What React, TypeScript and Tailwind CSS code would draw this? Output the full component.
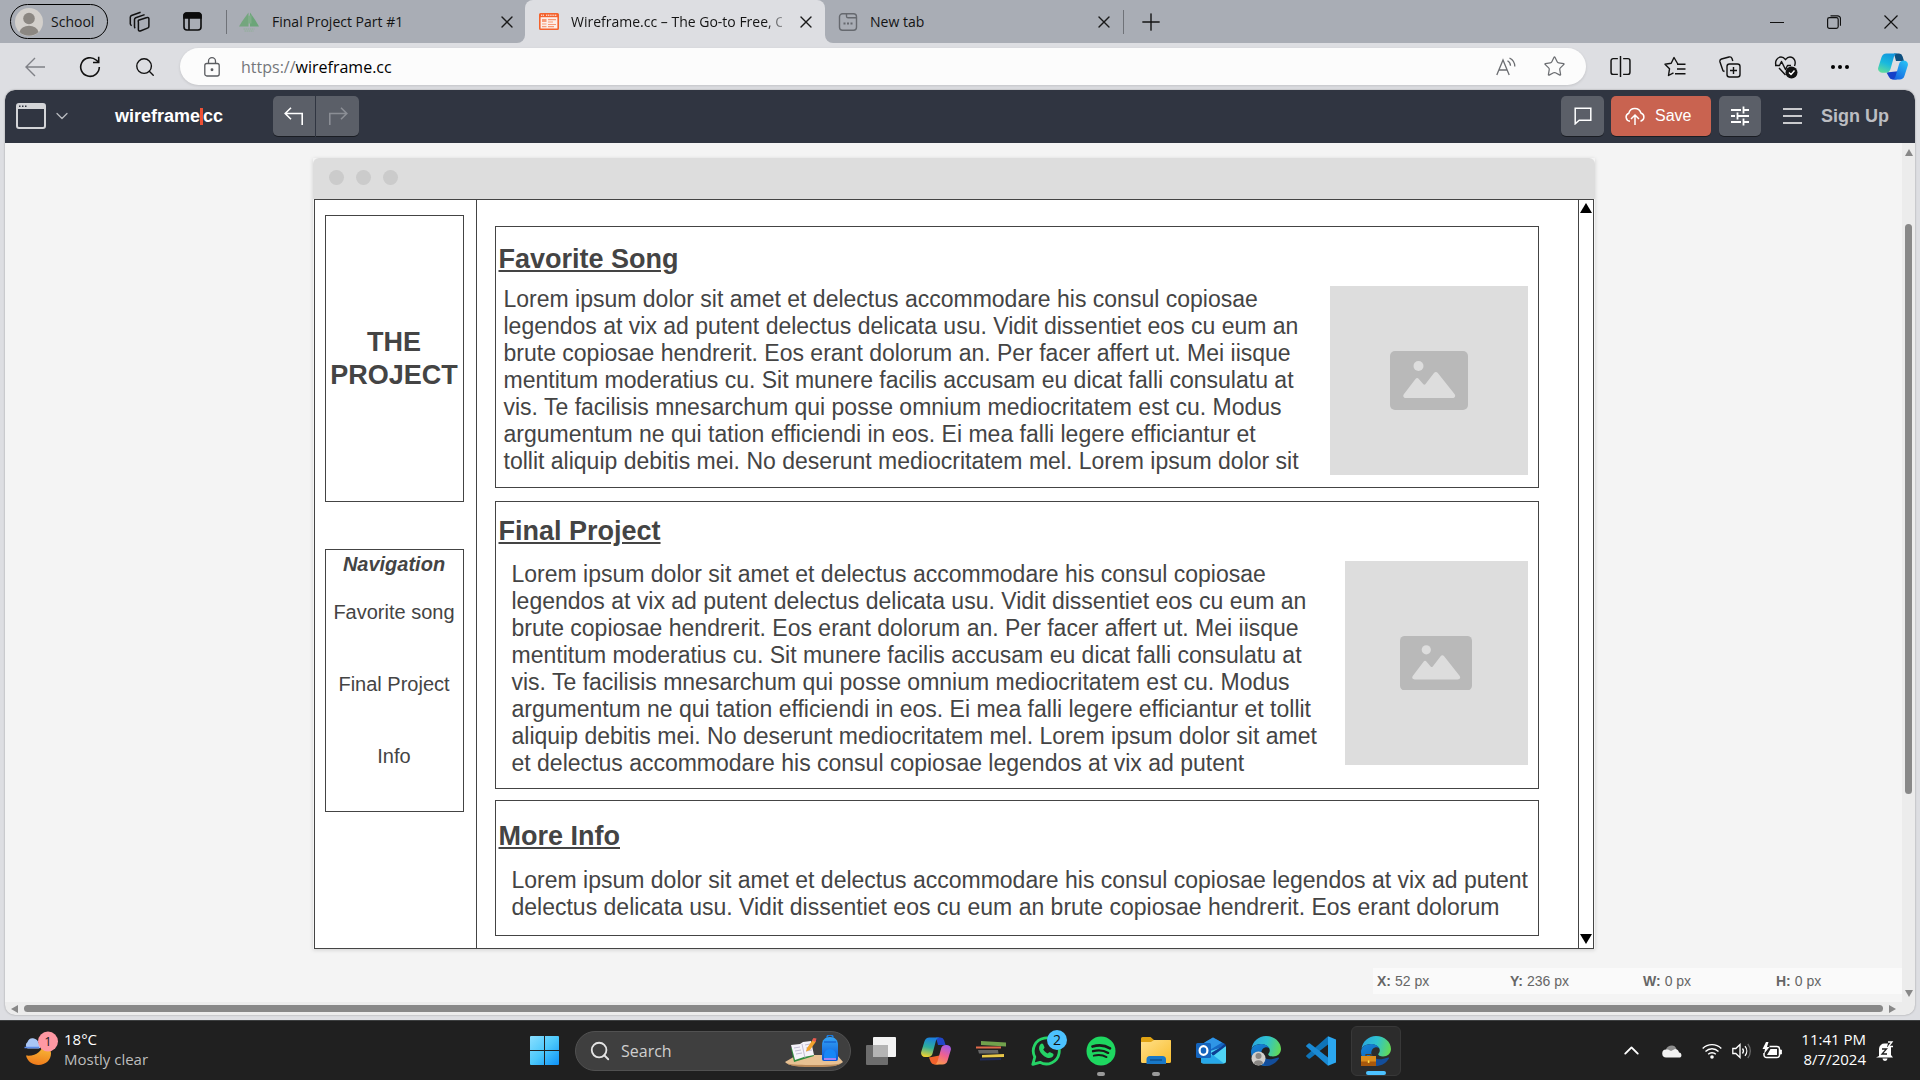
import React from "react";
import { Search, Plus, X, Star, ChevronUp, ChevronDown } from "lucide-react";

const UI = "font-['Open_Sans',sans-serif]";

/* ---------- Browser tab strip ---------- */

function Favicon({ kind }: { kind: "sail" | "wire" | "new" }) {
  if (kind === "sail")
    return (
      <svg viewBox="0 0 20 20" className="size-5">
        <path d="M9.5 0.5 3 9.500 0 14.500h9.500z" fill="#74a67e" />
        <path d="M11 0.500 16.500 8.500 20 14.500h-9z" fill="#6ba578" />
        <path d="M9 4v7.500h3.500V3z" fill="#7fae88" />
        <path d="M4.500 17h11M5.500 19h9" stroke="#8fae98" strokeWidth="1" strokeDasharray="1.500 0.500" />
      </svg>
    );
  if (kind === "wire")
    return (
      <svg viewBox="0 0 20 17" className="h-[17px] w-5">
        <rect x="0.8" y="0.8" width="18.4" height="15.4" rx="0.8" fill="#fdeee8" stroke="#f4622d" strokeWidth="1.6" />
        <rect x="1" y="1" width="18" height="3.2" fill="#f4622d" />
        <path d="M2 2.2h3M7 2.2h11" stroke="#fff" strokeWidth="1" strokeDasharray="1.2 0.6" />
        <rect x="3" y="6" width="4.5" height="3" fill="#f79a77" />
        <path d="M9 6.6h8M9 9h5M3 11h4.5M9 11.5h8M3 13.6h4.5M9 13.6h6" stroke="#f79a77" strokeWidth="1.1" />
      </svg>
    );
  return (
    <svg viewBox="0 0 20 18" className="h-[18px] w-5" fill="none" stroke="#66696f" strokeWidth="1.4">
      <rect x="1.5" y="0.8" width="17" height="16.4" rx="3" />
      <path d="M8.5 1v2.2a1.6 1.6 0 0 0 1.6 1.6h8.2" />
      <path d="M5.5 10.5h2M9 10.5h2M12.5 10.5h2" strokeWidth="2" />
    </svg>
  );
}

function Close() {
  return (
    <button aria-label="Close tab" className="flex size-6 shrink-0 items-center justify-center text-[#1a1a1a]">
      <X size={20} strokeWidth={1.6} />
    </button>
  );
}

function TabStrip() {
  return (
    <div className={`flex h-[43px] items-center bg-[#a9adb5] text-[14px] text-[#141414] ${UI}`}>
      <button className="ml-[10px] flex h-[35px] w-[98px] items-center gap-2 rounded-full border-[1.5px] border-black pl-1">
        <svg viewBox="0 0 28 28" className="size-7">
          <circle cx="14" cy="14" r="14" fill="#d3d0cc" />
          <circle cx="14" cy="10.5" r="5.8" fill="#8b8782" />
          <path d="M4.500 24a9.600 7.200 0 0 1 19 0a14 14 0 0 1-19 0z" fill="#8b8782" />
        </svg>
        School
      </button>
      <button aria-label="Workspaces" className="ml-5">
        <svg viewBox="0 0 22 22" className="size-[22px]" fill="none" stroke="#111" strokeWidth="1.5" strokeLinejoin="round">
          <path d="M10.5 9.2 19 6.5a1.4 1.4 0 0 1 1.9 1.3v7.4a2 2 0 0 1-1.4 1.9l-7.2 2.9a1.4 1.4 0 0 1-1.9-1.3v-7.6a2 2 0 0 1 .1-1.9z" />
          <path d="M7.3 17.2a1.6 1.6 0 0 1-.8-1.4V8.5A2 2 0 0 1 7.7 6.7L16.6 3.6" />
          <path d="M3.8 14.400A1.600 1.600 0 0 1 2.300 13V6.300A2 2 0 0 1 3.500 4.500L12.600 1.300" />
        </svg>
      </button>
      <button aria-label="Tab actions" className="ml-[33px]">
        <svg viewBox="0 0 19 19" className="size-[19px]" fill="none" stroke="#0c0c0c" strokeWidth="1.600">
          <rect x="1" y="1" width="17" height="17" rx="3" />
          <path d="M1 3.200A2.500 2.500 0 0 1 3.500 1h12A2.500 2.500 0 0 1 18 3.200V6H1z" fill="#0c0c0c" />
          <path d="M6 6v12" />
        </svg>
      </button>
      <span className="ml-6 h-6 w-px bg-[#6f7278]" />
      <div className="ml-3 flex w-[286px] items-center gap-[13px] pr-[6px]">
        <Favicon kind="sail" />
        <span className="flex-1 whitespace-nowrap">Final Project Part #1</span>
        <Close />
      </div>
      <div className="relative flex h-full w-[300px] items-center gap-3 rounded-t-lg bg-[#dddee2] pr-[7px] pl-[14px]">
        <span className="absolute bottom-0 -left-2 size-2 bg-[#dddee2]">
          <span className="block size-full rounded-br-lg bg-[#a9adb5]" />
        </span>
        <span className="absolute -right-2 bottom-0 size-2 bg-[#dddee2]">
          <span className="block size-full rounded-bl-lg bg-[#a9adb5]" />
        </span>
        <Favicon kind="wire" />
        <span className="min-w-0 flex-1 whitespace-nowrap [mask-image:linear-gradient(to_right,#000_92%,transparent_105%)]">
          Wireframe.cc – The Go-to Free, O
        </span>
        <Close />
      </div>
      <div className="flex w-[298px] items-center gap-3 pr-[7px] pl-[13px]">
        <Favicon kind="new" />
        <span className="flex-1">New tab</span>
        <Close />
      </div>
      <span className="h-6 w-px bg-[#6f7278]" />
      <button aria-label="New tab" className="ml-[13px]">
        <Plus size={28} strokeWidth={1.2} />
      </button>
      <div className="ml-auto flex items-center gap-[43px] pr-[22px]">
        <button aria-label="Minimize">
          <svg viewBox="0 0 14 14" className="size-[14px]"><path d="M0 7.500h14" stroke="#111" /></svg>
        </button>
        <button aria-label="Restore">
          <svg viewBox="0 0 14 14" className="size-[14px]" fill="none" stroke="#111" strokeWidth="1.200">
            <rect x="0.600" y="2.700" width="10.600" height="10.600" rx="1.800" />
            <path d="M3.500 0.800h7a3 3 0 0 1 3 3v7" />
          </svg>
        </button>
        <button aria-label="Close window">
          <svg viewBox="0 0 14 14" className="size-[14px]"><path d="M0.500 0.500l13 13M13.500 0.500l-13 13" stroke="#111" strokeWidth="1.200" /></svg>
        </button>
      </div>
    </div>
  );
}

/* ---------- Address bar ---------- */

function EdgeCopilot() {
  return (
    <svg viewBox="0 0 30 27" className="h-[27px] w-[30px]">
      <defs>
        <linearGradient id="ec1" x1="0.600" y1="0" x2="0.200" y2="1">
          <stop offset="0" stopColor="#1196dd" /><stop offset="0.500" stopColor="#19b9de" /><stop offset="1" stopColor="#62dd9a" />
        </linearGradient>
        <linearGradient id="ec2" x1="0.800" y1="0" x2="0.200" y2="1">
          <stop offset="0" stopColor="#27c0f5" /><stop offset="1" stopColor="#1762e0" />
        </linearGradient>
      </defs>
      <path d="M16 0.500h5a4 4 0 0 1 3.600 3L26 8h-8z" fill="#0e4f7e" />
      <path d="M8.500 19.500 11 24a4 4 0 0 0 3.500 2.500h4L22 18z" fill="#1640c8" />
      <path d="M8.500 0.500h11a4 4 0 0 0-3.500 3l-3.500 12.500a5 5 0 0 1-4.800 3.700H4a4 4 0 0 1-3.800-5L3.500 4.300A5.200 5.200 0 0 1 8.500 0.500z" fill="url(#ec1)" />
      <path d="M21.500 26.500H14a4 4 0 0 0 3.500-3L21 11.200a5 5 0 0 1 4.800-3.700h.2a4 4 0 0 1 3.800 5l-3.300 10.200a5.200 5.200 0 0 1-5 3.800z" fill="url(#ec2)" />
    </svg>
  );
}

function AddressBar() {
  return (
    <div className="flex h-[47px] items-center bg-[#dddee2] pr-3 text-[#111]">
      <button aria-label="Back" className="ml-[25px]">
        <svg viewBox="0 0 20 20" className="size-5" fill="none" stroke="#7f8187" strokeWidth="1.400">
          <path d="M20 10H1M10 1 1 10l9 9" />
        </svg>
      </button>
      <button aria-label="Refresh" className="ml-[34px]">
        <svg viewBox="0 0 22 22" className="size-[22px]" fill="none" stroke="#111" strokeWidth="1.600">
          <path d="M20.300 11a9.300 9.300 0 1 1-3.200-7l2.400 2.200" />
          <path d="M19.700 0.800v5.700H14" />
        </svg>
      </button>
      <button aria-label="Search" className="ml-[33px]"><Search size={22} strokeWidth={1.500} /></button>
      <div className="ml-6 flex h-[37px] flex-1 items-center rounded-full bg-[#fcfcfc] pr-5 pl-6 shadow-[0_1px_3px_rgba(0,0,0,0.12)]">
        <svg viewBox="0 0 16 20" className="h-5 w-4" fill="none" stroke="#5a5c60" strokeWidth="1.300" aria-hidden="true">
          <rect x="0.800" y="6.500" width="14.400" height="12.500" rx="2" />
          <path d="M4.500 6.500V4.200a3.500 3.500 0 0 1 7 0v2.300" />
          <circle cx="8" cy="12.700" r="0.800" fill="#5a5c60" />
        </svg>
        <a href="https://wireframe.cc" className={`ml-[21px] flex-1 text-[16px] text-black ${UI}`}>
          <span className="text-[#75777b]">https://</span>wireframe.cc
        </a>
        <button aria-label="Read aloud">
          <svg viewBox="0 0 20 20" className="size-5" fill="none" stroke="#6c6e72" strokeWidth="1.300">
            <path d="M0.800 18 7 3l6.200 15M2.800 13h8.300" />
            <path d="M11.500 3.800a6 6 0 0 1 3 5M13.500 1a9.500 9.500 0 0 1 5.300 8.500" />
          </svg>
        </button>
        <button aria-label="Add to favorites" className="ml-[27px] text-[#6c6e72]"><Star size={23} strokeWidth={1.300} /></button>
      </div>
      <div className="ml-6 flex items-center gap-[33px]">
        <button aria-label="Split screen">
          <svg viewBox="0 0 20 20" className="size-[21px]" fill="none" stroke="#111" strokeWidth="1.400">
            <path d="M7.500 2.500H3a2 2 0 0 0-2 2v11a2 2 0 0 0 2 2h4.500M12.500 2.500H17a2 2 0 0 1 2 2v11a2 2 0 0 1-2 2h-4.500M10 0v20" />
          </svg>
        </button>
        <button aria-label="Favorites">
          <svg viewBox="0 0 22 22" className="size-[22px]" fill="none" stroke="#111" strokeWidth="1.400" strokeLinejoin="round">
            <path d="M13.800 8 10 1.500 7.200 7.300 1 8.200l4.500 4.600-1 6.700 5-2.700" />
            <path d="M13 8.200h8.500M13 13h8.500M11 17.800h10.500" />
          </svg>
        </button>
        <button aria-label="Collections">
          <svg viewBox="0 0 22 22" className="size-[22px]" fill="none" stroke="#111" strokeWidth="1.400">
            <rect x="8" y="8" width="13" height="13" rx="2.500" />
            <path d="M14.500 11v7M11 14.500h7M5.500 15.500 4 14.800 1 6a2.500 2.500 0 0 1 1.500-3L10 1a2.500 2.500 0 0 1 3 1.500l.8 2.500" />
          </svg>
        </button>
        <button aria-label="Browser essentials">
          <svg viewBox="0 0 24 24" className="size-6" fill="none" stroke="#111" strokeWidth="1.400" strokeLinejoin="round">
            <path d="M2 10.500C0.500 6 3.500 2 7 2c2.200 0 3.500 1.300 4.500 2.700C12.500 3.300 13.800 2 16 2c3.700 0 6.500 4.200 4.500 9" />
            <path d="M1 10.500h4.500l2-4 4 8 2-4H17M5 13l6.500 7" />
            <circle cx="17.500" cy="17.500" r="6" fill="#111" stroke="none" />
            <path d="m15 17.500 2 2 3.500-4" stroke="#fff" />
          </svg>
        </button>
        <button aria-label="More" className="flex w-[18px] justify-between">
          <span className="size-1 rounded-full bg-black" /><span className="size-1 rounded-full bg-black" /><span className="size-1 rounded-full bg-black" />
        </button>
        <button aria-label="Copilot" className="-ml-1"><EdgeCopilot /></button>
      </div>
    </div>
  );
}

/* ---------- Wireframe editor header ---------- */

const headerButton = "flex h-10 items-center justify-center bg-[#5b5f68] shadow-[0_1px_0_rgba(0,0,0,0.45)]";

function EditorHeader() {
  return (
    <header className="flex h-[53px] items-center rounded-t-[9px] bg-[#303541] pb-px font-['Liberation_Sans',sans-serif]">
      <button aria-label="Canvas type" className="ml-[11px] flex items-center gap-[6px]">
        <svg viewBox="0 0 30 26" className="h-[26px] w-[30px]">
          <rect x="1" y="1" width="28" height="24" rx="2" fill="none" stroke="#d4d5d8" strokeWidth="2" />
          <path d="M1 1h28v5H1z" fill="#d4d5d8" />
          <path d="M3 3.200h1.500M6 3.200h1.500M9 3.200h1.500" stroke="#303541" strokeWidth="1.600" />
        </svg>
        <ChevronDown size={20} strokeWidth={1.500} className="text-[#b9bbc0]" />
      </button>
      <a href="#" className="ml-[43px] flex items-center text-[18px] font-bold text-white">
        wireframe<span className="h-[17px] w-[3px] bg-[#ee5035]" />cc
      </a>
      <div className="ml-[50px] flex gap-px">
        <button aria-label="Undo" className={`${headerButton} w-[42px] rounded-l-[5px]`}>
          <svg viewBox="0 0 20 18" className="h-[18px] w-5" fill="none" stroke="#fff" strokeWidth="1.600">
            <path d="M7 0.800 1.200 6.500 7 12.200M1.200 6.500h17V18" />
          </svg>
        </button>
        <button aria-label="Redo" className={`${headerButton} w-[43px] rounded-r-[5px]`}>
          <svg viewBox="0 0 20 18" className="h-[18px] w-5" fill="none" stroke="#8b8e95" strokeWidth="1.600">
            <path d="M13 0.800l5.800 5.700L13 12.200M18.800 6.500h-17V18" />
          </svg>
        </button>
      </div>
      <div className="ml-auto flex items-center pr-[26px]">
        <button aria-label="Comments" className={`${headerButton} w-[43px] rounded-[5px]`}>
          <svg viewBox="0 0 18 18" className="size-[18px]" fill="none" stroke="#fff" strokeWidth="1.500">
            <path d="M1.200 1.200h15.600v12H5.200l-4 3.600z" />
          </svg>
        </button>
        <button className="ml-[7px] flex h-10 w-[100px] items-center gap-[10px] rounded-[5px] bg-[#c96350] pl-[14px] text-[16px] text-white shadow-[0_1px_0_rgba(0,0,0,0.45)]">
          <svg viewBox="0 0 20 18" className="h-[18px] w-5" fill="none" stroke="#fff" strokeWidth="1.500">
            <path d="M5 14.300A4.200 4.200 0 0 1 3.800 6.200 6.300 6.300 0 0 1 15.900 6a4.300 4.300 0 0 1-.4 8.300" />
            <path d="M10 18V8M6 12l4-4 4 4" />
          </svg>
          Save
        </button>
        <button aria-label="Settings" className={`${headerButton} ml-2 w-[42px] rounded-[5px]`}>
          <svg viewBox="0 0 18 20" className="h-5 w-[18px]" stroke="#fff" strokeWidth="1.800">
            <path d="M0 4h10M13 4h5M0 10h4M7 10h11M0 16h10M13 16h5M12.500 0.500v7M6.500 6.500v7M12.500 12.500v7" />
          </svg>
        </button>
        <button aria-label="Menu" className="ml-[22px] flex w-[19px] flex-col gap-[5px]">
          <span className="h-[2px] bg-[#c9cacd]" /><span className="h-[2px] bg-[#c9cacd]" /><span className="h-[2px] bg-[#c9cacd]" />
        </button>
        <a href="#" className="ml-[19px] text-[18px] font-bold text-[#bcbdc1]">Sign Up</a>
      </div>
    </header>
  );
}

/* ---------- Wireframe canvas ---------- */

function ImagePlaceholder({ box, icon }: { box: string; icon: string }) {
  return (
    <div className={`flex shrink-0 items-center justify-center bg-[#ddd] ${box}`}>
      <svg viewBox="0 0 78 59" className={icon}>
        <rect width="78" height="59" rx="5" fill="#b9b9b9" />
        <circle cx="28.500" cy="15" r="5" fill="#ddd" />
        <path d="M16 47c-2.500 0-3.500-2-2-4L25.500 28c1-1.400 2.300-1.400 3.300 0l4.400 5c.8.900 1.600.9 2.300 0L44 22c1.200-1.500 2.600-1.500 3.800 0L64.500 43c1.500 2 .5 4-2 4z" fill="#ddd" />
      </svg>
    </div>
  );
}

type Section = {
  title: string;
  card: string;
  body: string;
  lines: string[];
  box?: string;
  icon?: string;
};

const sections: Section[] = [
  {
    title: "Favorite Song",
    card: "pt-4 pb-3",
    body: "mt-[10px] pl-[5px]",
    lines: [
      "Lorem ipsum dolor sit amet et delectus accommodare his consul copiosae",
      "legendos at vix ad putent delectus delicata usu. Vidit dissentiet eos cu eum an",
      "brute copiosae hendrerit. Eos erant dolorum an. Per facer affert ut. Mei iisque",
      "mentitum moderatius cu. Sit munere facilis accusam eu dicat falli consulatu at",
      "vis. Te facilisis mnesarchum qui posse omnium mediocritatem est cu. Modus",
      "argumentum ne qui tation efficiendi in eos. Ei mea falli legere efficiantur et",
      "tollit aliquip debitis mei. No deserunt mediocritatem mel. Lorem ipsum dolor sit",
    ],
    box: "h-[189px] w-[198px]",
    icon: "w-[78px]",
  },
  {
    title: "Final Project",
    card: "mt-[13px] pt-[13px] pb-[11px]",
    body: "mt-[13px] pl-[13px]",
    lines: [
      "Lorem ipsum dolor sit amet et delectus accommodare his consul copiosae",
      "legendos at vix ad putent delectus delicata usu. Vidit dissentiet eos cu eum an",
      "brute copiosae hendrerit. Eos erant dolorum an. Per facer affert ut. Mei iisque",
      "mentitum moderatius cu. Sit munere facilis accusam eu dicat falli consulatu at",
      "vis. Te facilisis mnesarchum qui posse omnium mediocritatem est cu. Modus",
      "argumentum ne qui tation efficiendi in eos. Ei mea falli legere efficiantur et tollit",
      "aliquip debitis mei. No deserunt mediocritatem mel. Lorem ipsum dolor sit amet",
      "et delectus accommodare his consul copiosae legendos at vix ad putent",
    ],
    box: "h-[204px] w-[183px]",
    icon: "w-[72px]",
  },
  {
    title: "More Info",
    card: "mt-[11px] pt-[19px] pb-[14px]",
    body: "mt-[14px] pl-[13px]",
    lines: [
      "Lorem ipsum dolor sit amet et delectus accommodare his consul copiosae legendos at vix ad putent",
      "delectus delicata usu. Vidit dissentiet eos cu eum an brute copiosae hendrerit. Eos erant dolorum",
    ],
  },
];

function Canvas() {
  return (
    <div className="mx-auto w-full max-w-[1282px] text-[#444] shadow-[0_1px_4px_rgba(0,0,0,0.15)]">
      <div className="flex h-[41px] items-center gap-3 rounded-t-md bg-[#ddd] pb-[2px] pl-4">
        <span className="size-[15px] rounded-full bg-[#cbcbcb]" />
        <span className="size-[15px] rounded-full bg-[#cbcbcb]" />
        <span className="size-[15px] rounded-full bg-[#cbcbcb]" />
      </div>
      <div className="mx-px flex border border-[#444] bg-white">
        <aside className="w-[162px] shrink-0 border-r border-[#444] pt-[15px] pr-3 pl-[10px]">
          <div className="flex h-[287px] items-center justify-center border border-[#444] text-center text-[27px] leading-[33px] font-bold">
            <h1>THE<br />PROJECT</h1>
          </div>
          <nav className="mt-[47px] h-[263px] border border-[#444] pt-[2px] text-center text-[20px] leading-6">
            <h2 className="font-bold italic">Navigation</h2>
            <ul className="mt-6 flex flex-col gap-12">
              <li><a href="#song">Favorite song</a></li>
              <li><a href="#project">Final Project</a></li>
              <li><a href="#info">Info</a></li>
            </ul>
          </nav>
        </aside>
        <main className="min-w-0 flex-1 pt-[26px] pr-[39px] pb-3 pl-[18px]">
          {sections.map((s) => (
            <section key={s.title} className={`border border-[#444] pr-[10px] pl-[3px] ${s.card}`}>
              <h2 className="text-[27px] leading-[33px] font-bold underline">{s.title}</h2>
              <div className={`flex items-start justify-between ${s.body}`}>
                <p className="text-[23px] leading-[27px] whitespace-pre">{s.lines.join("\n")}</p>
                {s.box && s.icon && <ImagePlaceholder box={s.box} icon={s.icon} />}
              </div>
            </section>
          ))}
        </main>
        <div className="flex w-[15px] shrink-0 flex-col items-center justify-between border-l border-[#444] pt-[3px] pb-1">
          <svg viewBox="0 0 12 10" className="h-[10px] w-3"><path d="M6 0l6 10H0z" fill="#000" /></svg>
          <svg viewBox="0 0 12 10" className="h-[10px] w-3"><path d="M6 10L0 0h12z" fill="#000" /></svg>
        </div>
      </div>
    </div>
  );
}

const readout = [
  ["X:", "52 px"],
  ["Y:", "236 px"],
  ["W:", "0 px"],
  ["H:", "0 px"],
];

function Editor() {
  return (
    <div className="mx-[5px] mb-[5px] flex flex-1 flex-col overflow-hidden rounded-[10px] bg-[#ececec] font-['Liberation_Sans',sans-serif] shadow-[0_0_2px_rgba(0,0,0,0.35)]">
      <EditorHeader />
      <div className="flex flex-1">
        <div className="flex min-w-0 flex-1 flex-col bg-[#f4f4f4] pt-[15px]">
          <Canvas />
          <dl className="mt-[19px] flex h-[26px] items-center self-end bg-[#fafafa] pl-1 text-[14px] text-[#666]">
            {readout.map(([k, v]) => (
              <div key={k} className="flex w-[133px] gap-1 last:w-[126px]">
                <dt className="font-bold">{k}</dt>
                <dd>{v}</dd>
              </div>
            ))}
          </dl>
        </div>
        <div className="flex w-[13px] flex-col items-center pt-[6px] pb-[5px]">
          <svg viewBox="0 0 8 7" className="h-[7px] w-2"><path d="M4 0l4 7H0z" fill="#888" /></svg>
          <span className="mt-[68px] h-[570px] w-[7px] rounded-full bg-[#888]" />
          <svg viewBox="0 0 8 7" className="mt-auto h-[7px] w-2"><path d="M4 7L0 0h8z" fill="#888" /></svg>
        </div>
      </div>
      <div className="flex h-[13px] items-center pr-[19px] pl-[6px]">
        <svg viewBox="0 0 7 8" className="h-2 w-[7px]"><path d="M0 4l7-4v8z" fill="#888" /></svg>
        <span className="mx-[6px] h-[7px] flex-1 rounded-full bg-[#888]" />
        <svg viewBox="0 0 7 8" className="h-2 w-[7px]"><path d="M7 4L0 0v8z" fill="#888" /></svg>
      </div>
    </div>
  );
}

/* ---------- Taskbar ---------- */

function EdgeIcon({ id, badge }: { id: string; badge: React.ReactNode }) {
  return (
    <svg viewBox="0 0 30 30" className="size-[30px]">
      <defs>
        <linearGradient id={`${id}a`} x1="0" y1="0.300" x2="1" y2="0.500">
          <stop offset="0" stopColor="#2aa6e0" /><stop offset="0.500" stopColor="#2fc3cf" /><stop offset="1" stopColor="#62d957" />
        </linearGradient>
        <linearGradient id={`${id}b`} x1="0" y1="0" x2="0.500" y2="1">
          <stop offset="0" stopColor="#1686d8" /><stop offset="1" stopColor="#0f5fb4" />
        </linearGradient>
      </defs>
      <path d="M0.500 13C1.500 5.500 7.500 0 15 0c8.500 0 15 6 15 13 0 4.500-3.500 7.500-8 7.500-3 0-4.800-1-4.800-2.200 0-.8 1.600-1.300 1.600-4C18.800 10.500 14 8 10 8 5 8 1.500 10.500.5 13z" fill={`url(#${id}a)`} />
      <path d="M0 16C0 11 4.500 8 10 8c4 0 7.500 1.800 8.500 4.500-1.500-1.200-3-1.500-4.500-1C10.500 12.700 9.500 16.500 11 20c1.700 4 5.500 6.500 9.500 7-1.700 1.700-3.500 2.800-6 3C6.500 30 0 23.500 0 16z" fill={`url(#${id}b)`} />
      <path d="M11 19c1.500 3 5 4.700 9.500 4.200 3-.3 5.500-1.700 6.800-1.700.7 0 .9.700.5 1.300C25.500 26.500 21 30 15.500 30 12 29 10 24 11 19z" fill="#134e9b" />
      {badge}
    </svg>
  );
}

function CopilotIcon() {
  return (
    <svg viewBox="0 0 30 28" className="h-7 w-[30px]">
      <defs>
        <linearGradient id="cp1" x1="0.500" y1="0" x2="0.300" y2="1">
          <stop offset="0" stopColor="#1a7fe0" /><stop offset="0.500" stopColor="#2fae9b" /><stop offset="1" stopColor="#f3d22e" />
        </linearGradient>
        <linearGradient id="cp2" x1="0.700" y1="0" x2="0.300" y2="1">
          <stop offset="0" stopColor="#a35bea" /><stop offset="0.500" stopColor="#f0618f" /><stop offset="1" stopColor="#fb9a4c" />
        </linearGradient>
      </defs>
      <path d="M15 0.500h4.500a4 4 0 0 1 3.600 2.800L24.600 8H17z" fill="#2146c8" />
      <path d="M8 20.500 9.800 25a4 4 0 0 0 3.600 2.500h4L21 18z" fill="#f2622c" />
      <path d="M8.500 0.500h10a4 4 0 0 0-3.500 3L11.700 16a5 5 0 0 1-4.800 4H4a4 4 0 0 1-3.800-5L3.500 4.300A5.200 5.200 0 0 1 8.500 0.500z" fill="url(#cp1)" />
      <path d="M21.500 27.500H13a4 4 0 0 0 3.500-3L20 12a5 5 0 0 1 4.800-4h1.200a4 4 0 0 1 3.800 5l-3.300 10.700a5.200 5.200 0 0 1-5 3.800z" fill="url(#cp2)" />
    </svg>
  );
}

function SearchArt() {
  return (
    <svg viewBox="0 0 58 32" className="h-8 w-[58px]">
      <defs>
        <linearGradient id="bp" x1="0" y1="0" x2="0" y2="1">
          <stop offset="0" stopColor="#35a5f7" /><stop offset="1" stopColor="#0a55d6" />
        </linearGradient>
      </defs>
      <path d="M0 27 12 20h40l6 7c-5 4.500-14 4.500-29 4.500S3 31 0 27z" fill="#e7c193" />
      <path d="M2 28.500c8 2 46 2 54 0-6 3.500-14 3.500-27 3.500S7 31.500 2 28.500z" fill="#b98a5a" />
      <path d="M6 13l19-5 4 13-20 6z" fill="#2f8b3c" />
      <path d="M6 10l9-1 3-2 8-1 3 14-10 2-9 3z" fill="#f5f3fa" />
      <path d="M17 9l3 14M9 13l6-1M10 16l6-1M11 19l6-1M20 10l5-1M21 13l5-1M21 16l6-1" stroke="#b4adc8" strokeWidth="0.800" />
      <path d="M22 13 28 4.500l3 2L25 15l-4 1.500z" fill="#f2a32c" />
      <path d="M27 5.500 28.500 3l3 .5L30.500 7z" fill="#ec5b4f" />
      <path d="M42 2.500a3 2.500 0 0 1 6 0" fill="none" stroke="#1d7de0" strokeWidth="1.500" />
      <path d="M37 10c0-5 3-8 8-8s8 3 8 8v14a2 2 0 0 1-2 2H39a2 2 0 0 1-2-2z" fill="url(#bp)" />
      <path d="M39 7h12" stroke="#0b50c4" />
      <path d="M39 20a6 6 0 0 1 12 0v4H39z" fill="#1787f5" />
      <path d="M39 23h12v2H39z" fill="#a183f4" />
    </svg>
  );
}

function Tile({
  label,
  children,
  active,
  running,
}: {
  label: string;
  children: React.ReactNode;
  active?: boolean;
  running?: boolean;
}) {
  return (
    <button
      aria-label={label}
      className={`relative flex size-[50px] shrink-0 items-center justify-center rounded-md ${active ? "border border-[#383838] bg-[#2c2c2c]" : ""}`}
    >
      {children}
      {active && <span className="absolute bottom-0 h-1 w-5 rounded-full bg-[#4cc2ff]" />}
      {running && <span className="absolute bottom-0 h-1 w-2 rounded-full bg-[#9a9a9a]" />}
    </button>
  );
}

function Taskbar() {
  return (
    <footer className={`flex h-[60px] items-center border-t border-[#3d3f40] bg-[#202020] text-white ${UI}`}>
      <div className="flex flex-1 items-center pb-1">
        <button className="ml-[22px] flex items-center text-left">
          <svg viewBox="0 0 36 36" className="size-9">
            <defs>
              <linearGradient id="moon" x1="0.600" y1="0" x2="0.400" y2="1">
                <stop offset="0" stopColor="#f8c23c" /><stop offset="1" stopColor="#f07a1a" />
              </linearGradient>
            </defs>
            <path d="M4 24.500c10 1 16-4 17.500-12 4.500 2 7.500 5 7.500 10C29 29 23.500 34 16.500 34 10.500 34 5.500 30.500 4 24.500z" fill="url(#moon)" />
            <path d="M5.500 17.500a4 4 0 0 1 0-6.500C6.500 8 9 6.500 12 7.500c3 .5 4 2.500 4.500 4.500 3 .5 3 5.500 0 5.500z" fill="#a9c6f5" />
            <path d="M2.500 16.500h14.500" stroke="#5c8be8" strokeWidth="1.500" />
            <circle cx="26" cy="10.500" r="10" fill="#ff98a3" />
            <text x="26" y="15" textAnchor="middle" fontSize="13" fill="#1b1b1b">1</text>
          </svg>
          <span className="ml-[6px] flex flex-col text-[15px] leading-5">
            <span>18°C</span>
            <span className="text-[#bdbdbd]">Mostly clear</span>
          </span>
        </button>
      </div>
      <div className="flex items-center gap-[5px]">
        <Tile label="Start">
          <svg viewBox="0 0 29 29" className="size-[29px]">
            <defs>
              <linearGradient id="win" x1="0" y1="0" x2="1" y2="1">
                <stop offset="0" stopColor="#8adfff" /><stop offset="0.500" stopColor="#4cc8fb" /><stop offset="1" stopColor="#0d91f7" />
              </linearGradient>
            </defs>
            <path d="M1 0h13v14H0V1a1 1 0 0 1 1-1zM15 0h13a1 1 0 0 1 1 1v13H15zM0 15h14v14H1a1 1 0 0 1-1-1zM15 15h14v13a1 1 0 0 1-1 1H15z" fill="url(#win)" />
          </svg>
        </Tile>
        <label className="ml-px flex h-10 w-[276px] items-center rounded-full border border-[#515151] bg-[#3f3f3f] pr-[7px] pl-[13px]">
          <Search size={22} strokeWidth={2} className="shrink-0 text-[#e4e4e4]" />
          <input aria-label="Search" placeholder="Search" className="ml-[10px] w-0 flex-1 bg-transparent text-[16px] outline-none placeholder:text-[#cfcfcf]" />
          <SearchArt />
        </label>
        <Tile label="Task view">
          <svg viewBox="0 0 30 28" className="h-7 w-[30px]">
            <rect x="7" y="0" width="23" height="20" rx="1" fill="#f3f3f3" />
            <rect x="0" y="8" width="22" height="20" rx="1" fill="#6d6d6d" />
            <path d="M7 8h15v12H7z" fill="#b4b4b4" />
          </svg>
        </Tile>
        <Tile label="Copilot"><CopilotIcon /></Tile>
        <Tile label="Reading list">
          <svg viewBox="0 0 30 20" className="h-5 w-[30px]">
            <path d="M5 0l25 1.500v4L5 4z" fill="#71a14c" />
            <path d="M0 5.500h25v2H0z" fill="#e06a4a" />
            <path d="M2 9h20l.5 3.500H3z" fill="#666" />
            <path d="M6 14l22-1v3L6 16.500z" fill="#e8c648" />
            <path d="M4 17.500l21-.5v2L4 19.500z" fill="#222b57" />
          </svg>
        </Tile>
        <Tile label="WhatsApp">
          <svg viewBox="0 0 30 30" className="size-[30px]">
            <path d="M1.800 28.300 3.800 21A13 13 0 1 1 9 26.300z" fill="none" stroke="#25d366" strokeWidth="2.800" strokeLinejoin="round" />
            <path d="M9.700 8c.8-.8 2-.8 2.500.2l1.200 2.700c.3.700-.1 1.300-1.200 2.400 1 2 2.500 3.400 4.600 4.300 1.100-1.300 1.500-1.700 2.300-1.300l2.700 1.300c1 .5.900 1.800.2 2.700-1.300 1.700-3.700 2.300-6.500 1.100-3.300-1.400-5.700-4-7-7-.9-2.300-.5-4.700 1.200-6.400z" fill="#25d366" />
          </svg>
          <span className="absolute top-1 right-1 flex size-5 items-center justify-center rounded-full bg-[#4cc2ff] text-[14px] leading-none text-[#111]">2</span>
        </Tile>
        <Tile label="Spotify" running>
          <svg viewBox="0 0 30 30" className="size-[30px]">
            <circle cx="15" cy="15" r="14.500" fill="#1ed760" />
            <g fill="none" stroke="#1a1a1a" strokeLinecap="round">
              <path d="M6.500 10.500c6-1.700 12.500-1.200 17.500 1.800" strokeWidth="2.700" />
              <path d="M7 15.200c5.200-1.500 10.700-1 15.200 1.700" strokeWidth="2.300" />
              <path d="M7.800 19.700c4.500-1.200 9-.8 12.700 1.400" strokeWidth="1.900" />
            </g>
          </svg>
        </Tile>
        <Tile label="File Explorer" running>
          <svg viewBox="0 0 30 27" className="h-[27px] w-[30px]">
            <defs>
              <linearGradient id="fold" x1="0" y1="0" x2="1" y2="1">
                <stop offset="0" stopColor="#ffe08a" /><stop offset="1" stopColor="#f9bd2d" />
              </linearGradient>
            </defs>
            <path d="M0 1.500A1.500 1.500 0 0 1 1.500 0h8l3.500 3h17v9H0z" fill="#e0a313" />
            <path d="M0 5h10l3-2h15.500A1.500 1.500 0 0 1 30 4.500v20a1.500 1.500 0 0 1-1.500 1.500h-27A1.500 1.500 0 0 1 0 24.500z" fill="url(#fold)" />
            <path d="M5.500 27v-4.500A3.500 3.500 0 0 1 9 19h12.500a3.500 3.500 0 0 1 3.500 3.500V27z" fill="#1878c8" />
            <path d="M9 23h12" stroke="#0c518f" strokeWidth="1.500" />
          </svg>
        </Tile>
        <Tile label="Outlook">
          <svg viewBox="0 0 30 27" className="h-[27px] w-[30px]">
            <path d="M5 8 17 .5 29 7v4L12 22H5z" fill="#1668c4" />
            <path d="M10 4.500 17 .5l9 5-13 8H5V8z" fill="#2f95e6" />
            <path d="M5 17 30 9v15a2.500 2.500 0 0 1-2.500 2.500h-20A2.500 2.500 0 0 1 5 24z" fill="#4fd4f5" />
            <path d="M15 16l10-6 4-3.500L30 9 17 19z" fill="#0c3f94" />
            <path d="M5 20l12-2 11 8.500H7.500A2.500 2.500 0 0 1 5 24z" fill="#27a8ea" />
            <rect x="0" y="6" width="15" height="15" rx="1.500" fill="#1464bd" />
            <ellipse cx="7.500" cy="13.500" rx="3.900" ry="4.300" fill="none" stroke="#fff" strokeWidth="2.200" />
          </svg>
        </Tile>
        <Tile label="Edge profile">
          <EdgeIcon
            id="e1"
            badge={
              <g>
                <circle cx="7.500" cy="22.500" r="7" fill="#d2cfcc" />
                <circle cx="7.500" cy="20" r="3" fill="#8a8784" />
                <path d="M2.800 27.500a4.800 4 0 0 1 9.400 0 7 7 0 0 1-9.400 0z" fill="#8a8784" />
              </g>
            }
          />
        </Tile>
        <Tile label="Visual Studio Code">
          <svg viewBox="0 0 30 30" className="size-[30px]">
            <path d="M22 0.200 30 3.500v23l-8 3.300z" fill="#2ba7f0" />
            <path d="M22 0.200 0.500 19.300a1 1 0 0 0 0 1.500L2.500 22.500a1.200 1.200 0 0 0 1.500 0L22 8.500z" fill="#0f74b8" />
            <path d="M22 29.800 0.500 10.700a1 1 0 0 1 0-1.500L2.500 7.500a1.200 1.200 0 0 1 1.500 0L22 21.500z" fill="#1a8ad4" />
          </svg>
        </Tile>
        <Tile label="Edge work" active>
          <EdgeIcon
            id="e2"
            badge={
              <g>
                <path d="M5 20v-1.500h5V20" fill="none" stroke="#5b3a12" strokeWidth="1.200" />
                <rect x="0" y="20" width="15" height="10" fill="#dc8d1c" />
                <path d="M0 25.500h15V30H0z" fill="#a8580c" />
                <rect x="6.800" y="24.500" width="1.600" height="2.400" fill="#ffe14d" />
              </g>
            }
          />
        </Tile>
      </div>
      <div className="flex flex-1 items-center justify-end">
        <button aria-label="Hidden icons"><ChevronUp size={25} strokeWidth={1.800} /></button>
        <svg viewBox="0 0 20 14" className="ml-[18px] h-[14px] w-5" aria-label="OneDrive">
          <path d="M4 8a5.500 5.500 0 0 1 10.500-3L10 10z" fill="#8d8d8d" />
          <path d="M4.500 13.500a4 4 0 0 1-.5-8c2-.3 3.500.5 5 1.500l4-2a4.500 4.500 0 0 1 4 3.500c3 0 3.500 5 0 5z" fill="#f2f2f2" />
        </svg>
        <button aria-label="Network, volume and battery" className="ml-5 flex items-center gap-[10px]">
          <svg viewBox="0 0 20 16" className="h-4 w-5" fill="none" stroke="#fff" strokeWidth="1.400">
            <path d="M0.700 5.500a13 13 0 0 1 18.600 0M3.500 8.500a9 9 0 0 1 13 0M6.200 11.300a5.300 5.300 0 0 1 7.600 0" />
            <circle cx="10" cy="14" r="1.800" fill="#fff" stroke="none" />
          </svg>
          <svg viewBox="0 0 20 16" className="h-4 w-5" fill="none" stroke="#fff" strokeWidth="1.300">
            <path d="M0.800 5.500h3L8 1.500v13l-4.200-4h-3z" />
            <path d="M10.500 5.500a4 4 0 0 1 0 5M13 3.200a7.500 7.500 0 0 1 0 9.600" />
            <path d="M15.800 1a11 11 0 0 1 0 14" stroke="#6a6a6a" />
          </svg>
          <svg viewBox="0 0 20 18" className="h-[18px] w-5" fill="none" stroke="#fff" strokeWidth="1.500">
            <path d="M7.500 4.500H15a2.500 2.500 0 0 1 2.500 2.500v6a2.500 2.500 0 0 1-2.500 2.500H4.500A2.500 2.500 0 0 1 2 13v-2" />
            <path d="M18 8h1.500v4H18z" fill="#fff" strokeWidth="0.800" />
            <path d="M8.500 7H15v6H5z" fill="#fff" stroke="none" />
            <path d="M4 0 0.500 7H3L2 12l5.500-7H5L6.500 0z" fill="#fff" stroke="none" />
          </svg>
        </button>
        <button className="ml-[19px] flex flex-col pb-1 text-[15px] leading-5">
          <span className="self-end">11:41 PM</span>
          <span className="self-end">8/7/2024</span>
        </button>
        <button aria-label="Notifications" className="mr-[26px] ml-[10px]">
          <svg viewBox="0 0 18 20" className="h-5 w-[18px]">
            <path d="M3 15V8a5.500 5.500 0 0 1 6-5.500h3L11 6h4v8l2 2.500H0z" fill="#fff" />
            <path d="M6.500 17.500h5a2.500 2.500 0 0 1-5 0z" fill="#fff" />
            <path d="M12 1h4l-3.500 4.500H17" fill="none" stroke="#fff" strokeWidth="1.300" />
            <path d="M6 8h4.500L6 13h5" fill="none" stroke="#202020" strokeWidth="1.300" />
          </svg>
        </button>
      </div>
    </footer>
  );
}

export default function App() {
  return (
    <div className="flex min-h-screen flex-col bg-[#dddee2]">
      <TabStrip />
      <AddressBar />
      <Editor />
      <Taskbar />
    </div>
  );
}
